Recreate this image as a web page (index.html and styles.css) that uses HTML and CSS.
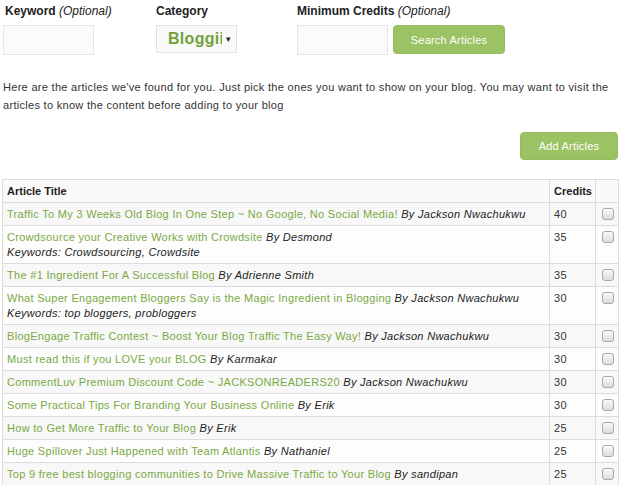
FILE: index.html
```html
<!DOCTYPE html>
<html>
<head>
<meta charset="utf-8">
<link rel="stylesheet" href="styles.css">
</head>
<body>
<div class="page">
  <form class="search">
    <div class="field f-keyword">
      <label>Keyword <em>(Optional)</em></label>
      <div class="input"></div>
    </div>
    <div class="field f-cat">
      <label>Category</label>
      <div class="select"><span class="sel-text">Bloggii</span><span class="caret">▾</span></div>
    </div>
    <div class="field f-min">
      <label>Minimum Credits <em>(Optional)</em></label>
      <div class="row-inline">
        <div class="input"></div>
        <div class="btn btn-search">Search Articles</div>
      </div>
    </div>
  </form>

  <p class="intro">Here are the articles we've found for you. Just pick the ones you want to show on your blog. You may want to visit the articles to know the content before adding to your blog</p>

  <div class="actions"><div class="btn btn-add">Add Articles</div></div>

  <table class="articles">
    <thead>
      <tr><th class="c-title">Article Title</th><th class="c-cred">Credits</th><th class="c-chk"></th></tr>
    </thead>
    <tbody>
      <tr><td><a>Traffic To My 3 Weeks Old Blog In One Step ~ No Google, No Social Media!</a> <em>By Jackson Nwachukwu</em></td><td>40</td><td class="c-chk"><span class="cb"></span></td></tr>
      <tr><td><a>Crowdsource your Creative Works with Crowdsite</a> <em>By Desmond</em><br><em>Keywords: Crowdsourcing, Crowdsite</em></td><td>35</td><td class="c-chk"><span class="cb"></span></td></tr>
      <tr><td><a>The #1 Ingredient For A Successful Blog</a> <em>By Adrienne Smith</em></td><td>35</td><td class="c-chk"><span class="cb"></span></td></tr>
      <tr><td><a>What Super Engagement Bloggers Say is the Magic Ingredient in Blogging</a> <em>By Jackson Nwachukwu</em><br><em>Keywords: top bloggers, probloggers</em></td><td>30</td><td class="c-chk"><span class="cb"></span></td></tr>
      <tr><td><a>BlogEngage Traffic Contest ~ Boost Your Blog Traffic The Easy Way!</a> <em>By Jackson Nwachukwu</em></td><td>30</td><td class="c-chk"><span class="cb"></span></td></tr>
      <tr><td><a>Must read this if you LOVE your BLOG</a> <em>By Karmakar</em></td><td>30</td><td class="c-chk"><span class="cb"></span></td></tr>
      <tr><td><a>CommentLuv Premium Discount Code ~ JACKSONREADERS20</a> <em>By Jackson Nwachukwu</em></td><td>30</td><td class="c-chk"><span class="cb"></span></td></tr>
      <tr><td><a>Some Practical Tips For Branding Your Business Online</a> <em>By Erik</em></td><td>30</td><td class="c-chk"><span class="cb"></span></td></tr>
      <tr><td><a>How to Get More Traffic to Your Blog</a> <em>By Erik</em></td><td>25</td><td class="c-chk"><span class="cb"></span></td></tr>
      <tr><td><a>Huge Spillover Just Happened with Team Atlantis</a> <em>By Nathaniel</em></td><td>25</td><td class="c-chk"><span class="cb"></span></td></tr>
      <tr><td><a>Top 9 free best blogging communities to Drive Massive Traffic to Your Blog</a> <em>By sandipan</em></td><td>25</td><td class="c-chk"><span class="cb"></span></td></tr>
    </tbody>
  </table>
</div>
</body>
</html>
```

FILE: styles.css
```css
html, body {
  margin: 0;
  padding: 0;
  background: #fff;
}
body {
  font-family: "Liberation Sans", Arial, sans-serif;
  font-size: 11px;
  color: #333;
  width: 626px;
  height: 485px;
  overflow: hidden;
}
.page {
  padding: 4px 8px 0 2px;
}
.search {
  display: flex;
  margin: 0;
}
.field label {
  display: block;
  font-size: 12px;
  font-weight: bold;
  color: #222;
  line-height: 15px;
  height: 15px;
  margin-bottom: 6px;
}
.field label em {
  font-weight: normal;
  font-style: italic;
}
.f-keyword { width: 153px; padding-left: 1px; }
.f-keyword label { padding-left: 2px; }
.f-cat { width: 141px; }
.f-min { flex: 1; }
.input {
  width: 89px;
  height: 28px;
  border: 1px solid #e6e6e6;
  background: #fbfbfb;
}
.select {
  width: 79px;
  height: 26px;
  margin-top: 1px;
  border: 1px solid #e2e2e2;
  background: #f9f9f9;
  display: flex;
  align-items: center;
  box-sizing: content-box;
  overflow: hidden;
}
.sel-text {
  font-size: 16px;
  font-weight: bold;
  color: #72a23a;
  padding-left: 11px;
  width: 54px;
  overflow: hidden;
  white-space: nowrap;
  letter-spacing: 0.3px;
}
.caret {
  font-size: 9px;
  color: #222;
  margin-left: 4px;
}
.row-inline {
  display: flex;
  gap: 5px;
}
.btn {
  background: #9bc263;
  color: #fff;
  border-radius: 4px;
  display: flex;
  align-items: center;
  justify-content: center;
  font-size: 11px;
  border: 1px solid #95bd5c;
  letter-spacing: 0.2px;
}
.btn-search {
  width: 110px;
  height: 27px;
}
.intro {
  margin: 23px 0 0 1px;
  line-height: 18px;
  color: #333;
  width: 620px;
  letter-spacing: 0.3px;
}
.actions {
  display: flex;
  justify-content: flex-end;
  margin-top: 18px;
  padding-right: 0;
}
.btn-add {
  width: 96px;
  height: 26px;
}
.articles {
  margin-top: 19px;
  width: 617px;
  border-collapse: collapse;
  border: 1px solid #dcdcdc;
  margin-left: 0;
  letter-spacing: 0.3px;
}
.articles th, .articles td {
  border: 1px solid #dcdcdc;
  padding: 4px 3px 3px 4px;
  text-align: left;
  vertical-align: top;
  line-height: 15px;
}
.articles th {
  font-weight: bold;
  color: #222;
  background: #fafafa;
  padding-top: 4px;
  padding-bottom: 3px;
  letter-spacing: 0;
}
.articles tbody tr:nth-child(odd) td { background: #f8f8f8; }
.articles tbody tr:nth-child(even) td { background: #fdfdfd; }
.articles th.c-cred, .articles td:nth-child(2) { width: 34px; }
.articles .c-chk { width: 12px; }
.articles td.c-chk { padding: 5px 4px 0 6px; }
.articles a {
  color: #7aa943;
  text-decoration: none;
}
.articles em {
  color: #222;
}
.cb {
  display: block;
  width: 10px;
  height: 10px;
  border: 1px solid #a8a8a8;
  border-radius: 3px;
  background: linear-gradient(#fafafa, #dcdcdc);
}
```
